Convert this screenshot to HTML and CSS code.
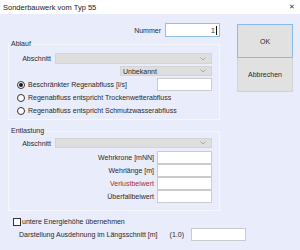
FILE: index.html
```html
<!DOCTYPE html>
<html lang="de">
<head>
  <meta charset="UTF-8">
  <title>Sonderbauwerk vom Typ 55</title>
  <link rel="stylesheet" href="styles.css">
</head>
<body>
  <div class="titlebar">
    <span class="title">Sonderbauwerk vom Typ 55</span>
    <span class="close">&#x2715;</span>
  </div>
  <div class="dialog">
    <div class="main">
      <div class="row nummer">
        <span class="lbl">Nummer</span>
        <div class="field focus">1<span class="caret"></span></div>
      </div>

      <fieldset class="group ablauf">
        <legend>Ablauf</legend>
        <div class="row combo-row">
          <span class="lbl">Abschnitt</span>
          <div class="combo wide"><svg class="chev" width="6" height="4" viewBox="0 0 6 4"><path d="M0.5 0.5 L3 3 L5.5 0.5" fill="none" stroke="#9a9a9a" stroke-width="0.8"/></svg></div>
        </div>
        <div class="row combo-row2">
          <div class="combo short"><span>Unbekannt</span><svg class="chev" width="6" height="4" viewBox="0 0 6 4"><path d="M0.5 0.5 L3 3 L5.5 0.5" fill="none" stroke="#9a9a9a" stroke-width="0.8"/></svg></div>
        </div>
        <div class="row radio-row first">
          <span class="radio checked"></span>
          <span class="rtext">Beschränkter Regenabfluss [l/s]</span>
          <div class="field"></div>
        </div>
        <div class="row radio-row">
          <span class="radio"></span>
          <span class="rtext">Regenabfluss entspricht Trockenwetterabfluss</span>
        </div>
        <div class="row radio-row">
          <span class="radio"></span>
          <span class="rtext">Regenabfluss entspricht Schmutzwasserabfluss</span>
        </div>
      </fieldset>

      <fieldset class="group entlastung">
        <legend>Entlastung</legend>
        <div class="row combo-row">
          <span class="lbl">Abschnitt</span>
          <div class="combo wide"><svg class="chev" width="6" height="4" viewBox="0 0 6 4"><path d="M0.5 0.5 L3 3 L5.5 0.5" fill="none" stroke="#9a9a9a" stroke-width="0.8"/></svg></div>
        </div>
        <div class="stack">
          <div class="row field-row"><span class="lbl">Wehrkrone [mNN]</span><div class="field"></div></div>
          <div class="row field-row"><span class="lbl">Wehrlänge [m]</span><div class="field"></div></div>
          <div class="row field-row"><span class="lbl red">Verlustbeiwert</span><div class="field"></div></div>
          <div class="row field-row"><span class="lbl">Überfallbeiwert</span><div class="field"></div></div>
        </div>
      </fieldset>

      <div class="check-row">
        <span class="checkbox"></span>
        <span>untere Energiehöhe übernehmen</span>
      </div>
      <div class="laengs-row">
        <span class="laengs-lbl">Darstellung Ausdehnung im Längsschnitt [m]</span>
        <span class="hint">(1.0)</span>
        <div class="field"></div>
      </div>
    </div>

    <div class="buttons">
      <button class="btn ok">OK</button>
      <button class="btn">Abbrechen</button>
    </div>
  </div>
</body>
</html>
```

FILE: styles.css
```css
body {
  margin: 0;
  width: 300px;
  height: 250px;
  overflow: hidden;
  background-color: #e9ecfb;
  color: #2a2a2a;
  font-family: "Liberation Sans", Arial, sans-serif;
  font-size: 7px;
}
.titlebar {
  height: 14px;
  background-color: #ffffff;
  display: flex;
  align-items: center;
  justify-content: space-between;
  padding: 0 5px 0 3px;
}
.title {
  font-size: 7.5px;
  color: #1a1a1a;
}
.close {
  font-size: 7px;
  color: #333;
}
.dialog {
  display: flex;
  padding: 9px 0 0 8px;
}
.main {
  width: 212px;
}
.row {
  display: flex;
  align-items: center;
  justify-content: flex-end;
}
.lbl {
  margin-right: 4px;
  white-space: nowrap;
}
.red {
  color: #b02a2a;
}
.field {
  width: 55px;
  height: 13px;
  box-sizing: border-box;
  background-color: #ffffff;
  border: 1px solid #cbcbcb;
  display: flex;
  align-items: center;
  justify-content: flex-end;
  padding-right: 2px;
}
.field.focus {
  border-color: #8fbfee;
}
.caret {
  width: 1px;
  height: 9px;
  background-color: #111;
  margin-left: 1px;
}
.nummer {
  height: 14px;
}
.nummer .field {
  height: 14px;
}

.group {
  margin: 2px 0 0 0;
  padding: 0 7px 0 0;
  border: 1px solid #f6f7fd;
  min-width: 0;
}
.group legend {
  padding: 0 1px;
  margin-left: 1px;
  line-height: 10px;
}
.combo {
  box-sizing: border-box;
  height: 11px;
  background-color: #dedede;
  border: 1px solid #d4d4d4;
  display: flex;
  align-items: center;
  justify-content: space-between;
  padding: 0 5px 0 2px;
}
.combo.wide {
  width: 157px;
  justify-content: flex-end;
}
.combo.short {
  width: 92px;
  height: 10px;
}
.combo-row {
  margin-top: 4px;
}
.combo-row2 {
  margin-top: 2px;
}
.radio-row {
  height: 13px;
  justify-content: flex-start;
  padding-left: 8px;
}
.radio-row.first {
  margin-top: 2px;
}
.radio-row .field {
  margin-left: auto;
}
.radio {
  box-sizing: border-box;
  width: 8px;
  height: 8px;
  border: 1px solid #333;
  border-radius: 50%;
  background-color: #fff;
  margin-right: 3px;
  display: flex;
  align-items: center;
  justify-content: center;
}
.radio.checked::after {
  content: "";
  width: 4px;
  height: 4px;
  border-radius: 50%;
  background-color: #1a1a1a;
}
.ablauf {
  padding-bottom: 2px;
}
.entlastung {
  margin-top: 6px;
  padding-bottom: 7px;
}
.entlastung .combo {
  height: 10px;
}
.entlastung .combo-row {
  margin-top: 2px;
}
.stack {
  margin-top: 3px;
}
.field-row .lbl {
  margin-right: 3px;
}

.check-row {
  display: flex;
  align-items: center;
  margin: 6px 0 0 5px;
  height: 9px;
}
.checkbox {
  box-sizing: border-box;
  width: 8px;
  height: 8px;
  border: 1px solid #333;
  background-color: #fff;
  margin-right: 1px;
}
.laengs-row {
  display: flex;
  align-items: center;
  margin: 2px 0 0 11px;
  width: 227px;
}
.laengs-lbl {
  white-space: nowrap;
}
.hint {
  margin-left: auto;
  margin-right: 7px;
}

.buttons {
  display: flex;
  flex-direction: column;
  margin: 1px 0 0 17px;
}
.btn {
  width: 56px;
  height: 34px;
  background-color: #e1e1e1;
  border: 1px solid #d2d2d2;
  border-top: none;
  font-family: "Liberation Sans", Arial, sans-serif;
  font-size: 7px;
  color: #2a2a2a;
  padding: 0;
}
.btn.ok {
  border: 1px solid #86bbec;
}
```
